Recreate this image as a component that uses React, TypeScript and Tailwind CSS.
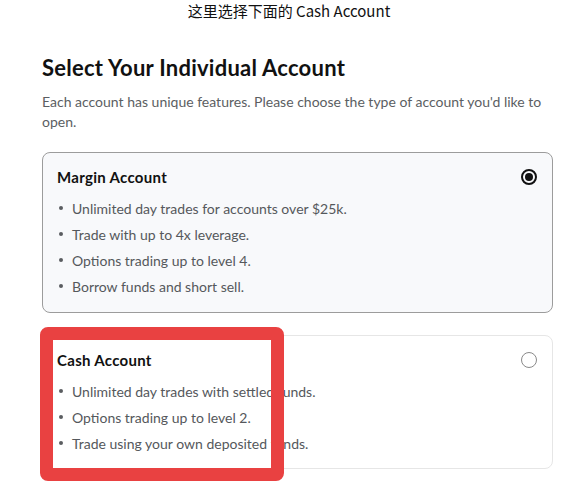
import React from 'react';

const marginFeatures = [
  'Unlimited day trades for accounts over $25k.',
  'Trade with up to 4x leverage.',
  'Options trading up to level 4.',
  'Borrow funds and short sell.',
];

const cashFeatures = [
  'Unlimited day trades with settled funds.',
  'Options trading up to level 2.',
  'Trade using your own deposited funds.',
];

const Radio: React.FC<{ checked: boolean }> = ({ checked }) =>
  checked ? (
    <div className="w-4 h-4 rounded-full border-2 border-[#111] flex items-center justify-center">
      <div className="w-2 h-2 rounded-full bg-[#111]"></div>
    </div>
  ) : (
    <div className="w-4 h-4 rounded-full border-[1.5px] border-[#8a8a8a]"></div>
  );

const AccountCard: React.FC<{
  title: string;
  features: string[];
  selected: boolean;
  children?: React.ReactNode;
}> = ({ title, features, selected, children }) => (
  <div
    className={
      selected
        ? 'relative rounded-[8px] border border-[#9c9c9c] bg-[#f8f9fb] pl-[14px] pr-[15px] pt-[12px] pb-[13px]'
        : 'relative rounded-[8px] border border-[#e6e6e6] bg-white pl-[14px] pr-[15px] pt-[12px] pb-[12px]'
    }
  >
    <div className="flex items-center justify-between h-6">
      <div className="text-[15px] font-bold text-[#111] leading-6 tracking-[0.3px]">{title}</div>
      <Radio checked={selected} />
    </div>
    <ul className="mt-[6px]">
      {features.map(f => (
        <li key={f} className="flex items-center h-[26px] text-[14px] text-[#55585c]">
          <span className="w-[4px] h-[4px] rounded-full bg-[#5a5d60] ml-[2px] mr-[9px]"></span>
          {f}
        </li>
      ))}
    </ul>
    {children}
  </div>
);

export default function App() {
  return (
    <div className="w-[578px] h-[499px] bg-white overflow-hidden font-['Lato',sans-serif]">
      <div className="text-center text-[15px] leading-[22px] text-[#111] font-['Noto_Sans_CJK_SC',sans-serif]">
        这里选择下面的 Cash Account
      </div>

      <div className="ml-[42px] w-[511px] mt-[32px]">
        <h1 className="text-[22px] font-bold leading-[28px] text-[#111] tracking-[0.25px]">
          Select Your Individual Account
        </h1>
        <p className="mt-[10px] text-[14px] leading-[20px] text-[#5b5e62]">
          Each account has unique features. Please choose the type of account you'd like to open.
        </p>

        <div className="mt-[20px] flex flex-col gap-[22px]">
          <AccountCard title="Margin Account" features={marginFeatures} selected />
          <AccountCard title="Cash Account" features={cashFeatures} selected={false}>
            {/* red annotation box */}
            <div className="absolute left-[-3px] top-[-9px] w-[244px] h-[154px] border-[13px] border-[#e94141] rounded-[8px] pointer-events-none"></div>
          </AccountCard>
        </div>
      </div>
    </div>
  );
}
